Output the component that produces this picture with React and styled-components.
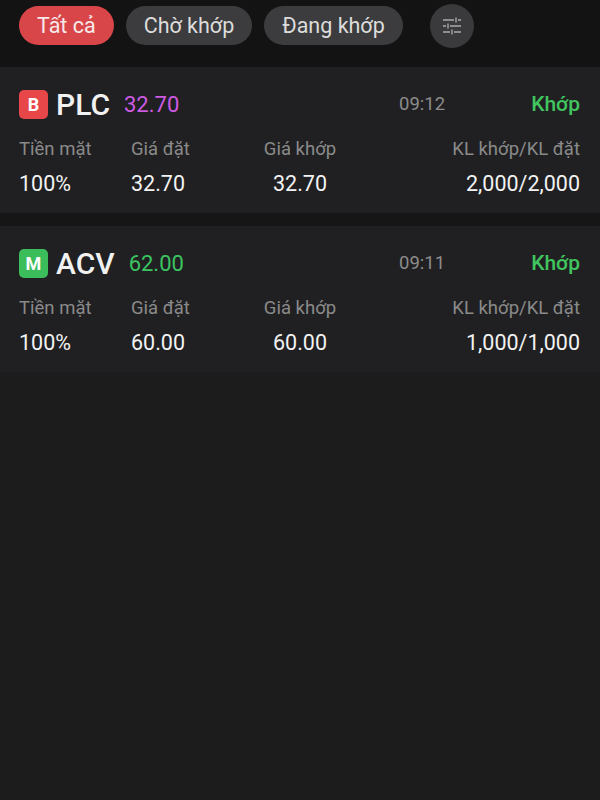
import React from 'react';
import styled, { createGlobalStyle } from 'styled-components';

const GlobalStyle = createGlobalStyle`
  html, body {
    margin: 0;
    padding: 0;
    background: #1c1c1d;
    font-family: Roboto, "Noto Sans", sans-serif;
  }
`;

const Page = styled.div`
  width: 600px;
  min-height: 800px;
  background: #1c1c1d;
`;

const TabBar = styled.div`
  display: flex;
  align-items: center;
  gap: 12px;
  height: 67px;
  padding: 0 19px;
  padding-bottom: 16px;
  box-sizing: border-box;
  background: #131313;
`;

const Pill = styled.button`
  height: 39px;
  padding: 0 18px;
  border: none;
  border-radius: 20px;
  background: ${(p) => (p.$active ? '#d9464a' : '#3c3c3e')};
  color: ${(p) => (p.$active ? '#f6e9e9' : '#dcdcdc')};
  font-family: Roboto, sans-serif;
  font-size: 21.5px;
  line-height: 39px;
  white-space: nowrap;
`;

const FilterButton = styled.button`
  width: 44px;
  height: 44px;
  margin-left: 15px;
  border: none;
  border-radius: 50%;
  background: #3a3a3c;
  display: flex;
  align-items: center;
  justify-content: center;
  padding: 0;
`;

const Card = styled.div`
  background: #202022;
  padding: 22px 20px 17px 19px;
  & + & {
    border-top: 13px solid #161616;
  }
`;

const Header = styled.div`
  display: flex;
  align-items: center;
  height: 30px;
`;

const Side = styled.span`
  width: 29px;
  height: 29px;
  border-radius: 5px;
  background: ${(p) => (p.$buy ? '#e8474a' : '#3cbd5b')};
  color: #fff;
  font-size: 18px;
  font-weight: 700;
  display: flex;
  align-items: center;
  justify-content: center;
`;

const Symbol = styled.span`
  margin-left: 8px;
  font-size: 30px;
  font-weight: 500;
  color: #f1f1f1;
`;

const Price = styled.span`
  margin-left: 14px;
  font-size: 22px;
  color: ${(p) => p.$color};
  flex: 1;
`;

const Time = styled.span`
  font-size: 18.5px;
  color: #8c8c8c;
`;

const Status = styled.span`
  margin-left: 86px;
  font-size: 21px;
  font-weight: 500;
  color: #40c55f;
`;

const Grid = styled.div`
  display: grid;
  grid-template-columns: 112px 119px 100px 1fr;
  row-gap: 12px;
  margin-top: 19px;
`;

const Cell = styled.span`
  text-align: ${(p) => p.$align || 'left'};
  white-space: nowrap;
  font-size: ${(p) => (p.$label ? '18.5px' : '21.5px')};
  line-height: ${(p) => (p.$label ? '22px' : '24px')};
  color: ${(p) => (p.$label ? '#8a8a8a' : '#f2f2f2')};
`;

const TuneIcon = () => (
  <svg width="24" height="24" viewBox="0 0 24 24" fill="none" stroke="#8e8e8e" strokeWidth="1.8">
    <path d="M3 6h11M18 6h3M16 3.5v5" />
    <path d="M3 12h3M10 12h11M8 9.5v5" />
    <path d="M3 18h7M14 18h7M12 15.5v5" />
  </svg>
);

const orders = [
  { side: 'B', symbol: 'PLC', price: '32.70', priceColor: '#cd5ae3', time: '09:12', cash: '100%', placed: '32.70', matched: '32.70', volume: '2,000/2,000' },
  { side: 'M', symbol: 'ACV', price: '62.00', priceColor: '#3cc460', time: '09:11', cash: '100%', placed: '60.00', matched: '60.00', volume: '1,000/1,000' },
];

export default function App() {
  return (
    <Page>
      <GlobalStyle />
      <TabBar>
        <Pill $active>Tất cả</Pill>
        <Pill>Chờ khớp</Pill>
        <Pill>Đang khớp</Pill>
        <FilterButton>
          <TuneIcon />
        </FilterButton>
      </TabBar>
      {orders.map((o) => (
        <Card key={o.symbol}>
          <Header>
            <Side $buy={o.side === 'B'}>{o.side}</Side>
            <Symbol>{o.symbol}</Symbol>
            <Price $color={o.priceColor}>{o.price}</Price>
            <Time>{o.time}</Time>
            <Status>Khớp</Status>
          </Header>
          <Grid>
            <Cell $label>Tiền mặt</Cell>
            <Cell $label>Giá đặt</Cell>
            <Cell $label $align="center">Giá khớp</Cell>
            <Cell $label $align="right">KL khớp/KL đặt</Cell>
            <Cell>{o.cash}</Cell>
            <Cell>{o.placed}</Cell>
            <Cell $align="center">{o.matched}</Cell>
            <Cell $align="right">{o.volume}</Cell>
          </Grid>
        </Card>
      ))}
    </Page>
  );
}
